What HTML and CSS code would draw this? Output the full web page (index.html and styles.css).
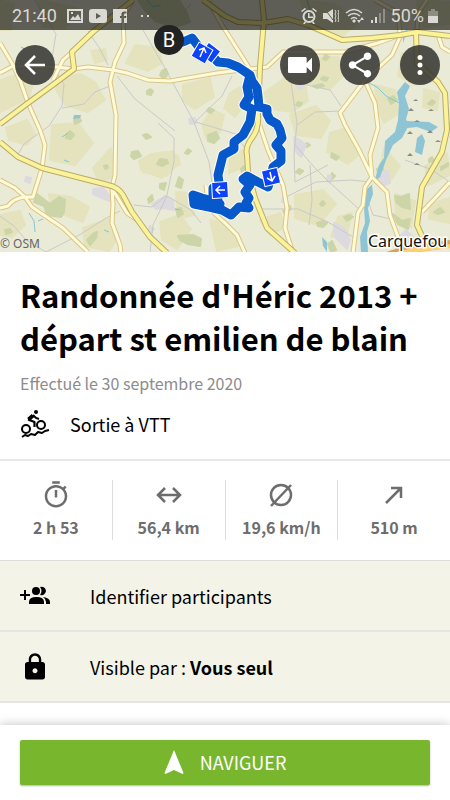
FILE: index.html
```html
<!DOCTYPE html>
<html lang="fr">
<head>
    <meta charset="utf-8">
    <meta name="viewport" content="width=device-width, initial-scale=1">
    <title>Randonnée d'Héric 2013</title>
    <link rel="stylesheet" href="styles.css">
</head>
<body>
    <header class="hero">
        <svg class="map" viewBox="0 0 450 252" preserveAspectRatio="xMidYMid slice" aria-hidden="true">
            <defs>
                <path id="main-roads" d="M0 124L28 103L50 87L74 69L72 52L93 32L133 0M0 142L18 157L42 168L108 185Q118 187 123 195L132 212L150 237L167 253M203 0L225 16L238 22L263 23L288 19L308 25L342 40L372 38L400 35L417 32L450 36M262 0L264 20L260 67L258 115Q259 129 252 138Q245 147 247 155L248 172L255 198L267 228L295 253M416 33L417 63L438 82L445 93L447 130L442 152L422 187L417 225L422 236"/>
                <path id="roads" d="M0 73L13 66L57 67L73 69L88 67L113 70L127 73L148 80L170 81L217 73L250 69L267 67L283 52L345 52L378 43L400 35M53 80L63 60L72 52M0 43L13 65L20 80L28 103L40 130L45 145L42 168L33 197L25 197Q14 198 8 206L0 208M133 0L123 17L124 43L115 62L110 82L116 115L115 175L112 187L113 205L112 223L120 245L121 253M113 190L127 213L137 220M0 180L15 188L25 197L32 207L63 228L88 252M208 0L222 25L250 69M400 37L392 55L365 80L340 113L345 125L358 148L372 177L387 192L390 215L398 237M366 83L375 103L378 128L370 155L372 177L365 187L363 205L358 213L353 253M375 0L398 13L400 33M427 0L418 13L417 32M438 35L442 47L450 52M260 126L268 150L283 185L287 208L285 228L293 253M206 185L208 203L215 214L225 223L237 235L245 253M450 182L438 195L422 212"/>
                <path id="track" d="M169 40L183 42L192 38L202 51L210 54L218 62L228 63L238 67L250 75L252 81L257 88L258 96L259 107L267 109L267 114L270 120L277 124L280 130L282 138L276 145L281 151L281 161L273 167L271 178L268 187L258 182L247 176L243 179L250 185L245 192L249 198L246 203L249 208L239 207L231 215L222 210L209 207L194 204L193 195L202 198L213 201L220 204L212 206L196 199M218 200L213 194L213 188M250 75L247 87L249 97L244 105L252 109L250 122L243 135L234 142L234 149L223 155L218 175L220 190"/>
            </defs>
            <rect width="450" height="252" fill="#eaebd7"/>
            <g class="patches" fill="#e4e3bd" stroke="#e4e3bd">
                <path d="M0 80l25-8 8 12-4 14-29 14zM58 78l22-4 15 8 10 18-17 12-23-7-9-15zM135 45l24 3 3 15-14 8-22-8zM52 125l26-2 15 20-18 22-25-5zM93 168l18-20 4 29-16 5zM145 160l28-9 5 13-12 12-23-4zM0 215l20-4 5 14-13 12-12-2zM49 194l22 3 18 10-6 15-32-12zM83 228l28-10 8 19-10 14-24-5zM183 85l27-7 4 19-19 12-12-8zM230 93l10-6 5 17-10 13-11-9zM212 110l12 5-4 17-14 6-4-14zM176 192l15 1 3 22-16 4zM210 220l18 3 10 23-21 5zM264 93l22-16 19 6 3 18-16 11-22-3zM290 115l26-9 14 15-9 17-25-3zM295 195l28-5 13 14-18 21-23-7zM330 133l16-5 16 24-14 12-21-12zM312 58l26-1 5 19-13 13-22-5zM375 85l20 5 4 23-15 10-7-16zM402 53l22 1 8 19-18 12-16-9zM384 148l16 18-8 13-13-5zM395 194l20 7-4 26-15-6zM424 89l15 4-2 17-14-3zM425 166l22-13 3 22-21 10zM430 204l20-6v25l-21-4zM260 220l20-7 5 14-15 8zM230 154l14-4-2 18-13 5zM0 0l14 4-3 26H0zM39 0l38 8-12 21-23-2zM300 0l35 4 22 19-15 14-34-14zM416 0l34 2v22l-27 3z"/>
                <path d="M139 161l12-7 15-2 12 4 2 9-13 3-5 10-11-4-10-4zM91 51l14-2 2 11-12 3zM27 120l8 14-8 11-18-5-3-12zM338 217l14-4-5 21-16 3zM160 222l20-7 11 14-14 20-15-9z"/>
            </g>
            <g class="patches" fill="#ccd5a7" stroke="#ccd5a7">
                <path d="M138 0h41l8 13 3 9-15 5-20-6-11-12zM162 71l4-2 2 5-4 5-4-4zM147 91l3-2 3 2-2 4-4-1zM209 108l5 2-3 3-4-2zM76 117l3-1 2 5-6 3-1-4zM132 152l6-1 3 5-7 3-3-3zM143 135l4-1 4 3-5 2zM160 159l7 1 1 3-6 3-5-2zM188 149l3 2-3 3-3-1zM208 135l8-3 3 6-5 5-6-2zM37 194l13 10 9-7 6 3-1 12-3 5-14-2-3-9-10-4zM66 135l4-4 4 4-3 4-5-1zM104 166l3-1 1 3-3 1zM148 199l4-4 1 5-4 3zM160 184l6-1-2 7-4-2zM179 177l4 3-2 8-5-2zM87 240l6-6 4-2-1 6-6 7zM178 236l15-1 8 4-1 7-12-2-8-4zM176 209l5-1 2 6-5 3z"/>
                <path d="M284 68l3-1-1 3zM287 78l5 1-3 2zM298 102l4 1-2 3-4-1zM313 86l9-2 2 2-7 2zM325 55l4 2-3 3-3-1zM323 77l5 1-2 3-5-2zM332 153l7 4-3 3-5-3zM332 173l3 3-4 4zM296 172l3-3 4 2-3 3zM320 204l3-3 2 3-3 2zM317 223l6-2 4 2-4 4-5-1zM344 217l6-2 3 2-6 4zM328 244l4-3 4 9-5 2zM283 211l7-5 1 3-6 5zM377 169l5-3 2 7-5 4zM395 196l6 1 8-3 1 15-8-2-6-5zM393 214l9 7 8-2-2 10-10-5zM429 159l3-2 2 4-5 1zM445 124l4-1v5l-4-1zM441 167l7-4v3l-7 4zM434 212l6-4 4 4-6 2zM421 76l6 2-3 4-5-2zM388 99l5-3 4 4-6 4zM432 100l3 2-3 3-4-1zM305 145l2-2 3 2-3 2zM241 169l3-3 1 4-3 3zM5 230l5-1 2 3-6 2z"/>
            </g>
            <g class="patches" fill="#dcdade" stroke="#dcdade">
                <path d="M93 189l10-1 6 7 3 7-10-4-9-4zM152 204l13-8 8 5 1 9-10-2-8 1zM189 119l6-1 1 5-6 1zM26 177l5 1-1 5-5-2zM294 137l6 3 6 5-5 12-6-6zM328 175l3 1-1 7-3-2zM334 223l10 5 6 12-3 9-12-12zM381 172l7-1 2 12-8 3-3-8zM398 238l8-8 9 9-6 11-13-2zM283 197l4-1-1 5-4 1zM297 84l4-1 1 5-4 1zM150 226l4 3-3 4-3-3z"/>
            </g>
            <g fill="none" stroke="#cac9c8" stroke-width="1">
                <path d="M35 0l21 34-5 30 13 20-2 22-13 20-25 18-7 12M62 108l22-4 11-12 15-6M88 31l12 18 8 16M117 76l18 23 20 16 20 16M191 4l-18 19-27-7M143 30l23 40 28 52 15 40 3 20M195 122l27-26 10-20M196 122l40 12 12 19M0 216l14 10 12 14 20 12 35-18 25-16 14-7M134 205l18 2 15-12 7-34v-23l-16-15M167 196l24 14 10 13M291 83l6 40-3 30 1 29 33-17M284 198l32-16 35-2 19 2M310 165l2 35-3 25M256 209l42 0 30 13 25 15M295 145l20 23 13 13 33 30M297 125l18-13 27-1M298 83l32 7 11 16M364 190l9 25 18 4M405 160l25 9 20 13M167 196l-14 29-3 28"/>
            </g>
            <g fill="#8ec4d4">
                <path d="M405 82l5 4-5 10 4 13-3 10 3 6-7 13-9 7-7 15-6 17-8 8 1 9-5 14 2 13-3 11 1 20h-7l-1-15 5-14-1-17 3-17 7-6 5-18 5-7 1-17 10-9 3-12 1-17-2-11zM407 121l22 1 9 5-7 5-14-5-10 1zM417 138l5-4 3 7-3 14-7-3zM403 32l5-3-5 14zM74 115l7 0-1 3-7 1zM322 237l5 5v10l-4-6z"/>
            </g>
            <path d="M21 47l4 2M62 137l6-4M29 213l5 8 1 11M38 221l5-2M104 230l5 2M64 160l5 2M175 209l5 1M365 81l12 6 9 9 15 8M307 0l3 10-4 7M147 0l6 7 8-2" fill="none" stroke="#83c6d3"/>
            <path d="M408 111h6l-3-3zM413 101h5l-2-2zM428 111h6l-3-2zM414 122h6l-3-2zM407 134h6l-3-3zM427 133h6l-3-3zM407 156h6l-3-3zM414 165h6l-3-2zM435 142h6l-3-2z" fill="#8a8a86"/>
            <path d="M387 256L408 249L450 244" fill="none" stroke="#dfa04f" stroke-width="8"/>
            <path d="M389 256L408 251L450 246" fill="none" stroke="#ffd070" stroke-width="4"/>
            <g fill="none" stroke-linejoin="round">
                <use href="#roads" stroke="#dcc488" stroke-width="5"/>
                <use href="#roads" stroke="#fffbd6" stroke-width="3"/>
                <use href="#main-roads" stroke="#b9ab6e" stroke-width="6"/>
                <use href="#main-roads" stroke="#fbf397" stroke-width="4"/>
            </g>
            <g fill="none" stroke-linejoin="round" stroke-linecap="round">
                <use href="#track" stroke="#fff" stroke-width="11"/>
                <use href="#track" stroke="#0758cb" stroke-width="9"/>
            </g>
            <g fill="#0b42fa" stroke="#fff" stroke-width="1">
                <rect x="-7" y="-7" width="15" height="15" transform="translate(210 52) rotate(38)"/>
                <path d="M207 49l5 1-2 5" fill="none"/>
                <rect x="-8" y="-8" width="16" height="16" transform="translate(202 53) rotate(30)"/>
                <rect x="-8" y="-8" width="16" height="16" transform="translate(271 177) rotate(-13)"/>
                <rect x="-8" y="-8" width="16" height="16" transform="translate(220 190) rotate(-3)"/>
            </g>
            <path d="M200 57l4-9M199 50l5-2 2 5M270 172l2 9M267 178l5 3 3-5M225 190h-9M220 186l-4 4 4 4" fill="none" stroke="#fff" stroke-width="1.5"/>
            <text class="town" x="368" y="247">Carquefou</text>
            <text class="credit" x="0" y="248">© OSM</text>
        </svg>

        <div class="overlay">
            <div class="status">
                <span>21:40</span>
                <svg width="16" height="14" viewBox="0 0 16 14"><path fill-rule="evenodd" d="M0 0h16v14H0zM2 2v10h12V2zM3 11l3-4 2 2 3-4 3 6zM4 3h2v2H4z"/></svg>
                <svg width="18" height="14" viewBox="0 0 18 14"><path fill-rule="evenodd" d="M3 0h12q3 0 3 3v8q0 3-3 3H3q-3 0-3-3V3q0-3 3-3zM7 4v6l5-3z"/></svg>
                <svg width="14" height="14" viewBox="0 0 14 14"><path d="M0 0h14v14h-3V9h2l.4-2H11V5.500q0-1 1-1h1.500v-2h-2Q8.500 2.500 8.500 5v2H7v2h1.500v5H0z"/></svg>
                <svg class="dots" width="9" height="4" viewBox="0 0 9 4"><path d="M0 1h2v2H0zM6 1h2v2H6z"/></svg>
                <span class="spacer"></span>
                <svg width="16" height="16" viewBox="0 0 16 16"><circle cx="8" cy="8.500" r="5.500" fill="none" stroke="#dad9d3" stroke-width="2"/><path d="M7 5h1.500v3.500H12V10H7zM0 3l4-3 1 1-4 3zM12 0l4 3-1 1-4-3zM2 16l2-3 1 1-1 2zM12 13l2 3h-2l-1-2z"/></svg>
                <svg width="16" height="16" viewBox="0 0 16 16"><path d="M0 5h4l6-4v14l-6-4H0z"/><path d="M1 0l9 12" fill="none" stroke="#5d5d56"/><path d="M12 2l1 2-1 2 1 2-1 2 1 2-1 2M15 2l1 2-1 2 1 2-1 2 1 2-1 2" fill="none" stroke="#dad9d3"/></svg>
                <svg width="20" height="16" viewBox="0 0 20 16"><path d="M1 5q8-7 16 0M3 8q6-5 12 0M6 11q3-3 6 0" fill="none" stroke="#dad9d3" stroke-width="1.600"/><path d="M7 13l2-2 2 2-2 2zM12 12h4l-2 3zM15 12l2-3 2 3z"/></svg>
                <svg width="14" height="14" viewBox="0 0 14 14"><path d="M0 11h2v3H0zM4 8h2v6H4z"/><path d="M8 4h2v10H8zM12 0h2v14h-2z" opacity=".4"/></svg>
                <span>50%</span>
                <svg class="battery" width="10" height="14" viewBox="0 0 10 14"><path d="M3 0h4v2h3v5H0V2h3z" opacity=".4"/><path d="M0 7h10v7H0z"/></svg>
            </div>
            <nav class="actions">
                <button class="round" aria-label="Retour">
                    <svg width="30" height="30" viewBox="0 0 30 30" fill="none" stroke="#fff" stroke-width="2.500"><path d="M25 15H7M15 6l-9 9 9 9"/></svg>
                </button>
                <span class="spacer"></span>
                <button class="round" aria-label="Vidéo">
                    <svg width="32" height="32" viewBox="0 0 24 24" fill="#fff"><path d="M17 10.500V7c0-.55-.45-1-1-1H4c-.55 0-1 .45-1 1v10c0 .55.45 1 1 1h12c.55 0 1-.45 1-1v-3.500l4 4v-11l-4 4z"/></svg>
                </button>
                <button class="round" aria-label="Partager">
                    <svg width="30" height="30" viewBox="0 0 24 24" fill="#fff"><path d="M18 16.080c-.76 0-1.440.3-1.960.77L8.910 12.700c.05-.23.09-.46.09-.7s-.04-.47-.09-.7l7.050-4.110c.54.5 1.250.81 2.040.81 1.660 0 3-1.340 3-3s-1.340-3-3-3-3 1.340-3 3c0 .24.04.47.09.7L8.040 9.810C7.500 9.310 6.790 9 6 9c-1.660 0-3 1.340-3 3s1.340 3 3 3c.79 0 1.500-.31 2.040-.81l7.120 4.160c-.05.21-.08.43-.08.65 0 1.610 1.310 2.920 2.920 2.920s2.920-1.310 2.920-2.920-1.310-2.920-2.920-2.920z"/></svg>
                </button>
                <button class="round" aria-label="Plus d'options">
                    <svg width="30" height="30" viewBox="0 0 24 24" fill="#fff"><circle cx="12" cy="6" r="2"/><circle cx="12" cy="12" r="2"/><circle cx="12" cy="18" r="2"/></svg>
                </button>
            </nav>
            <span class="pin">B</span>
        </div>
    </header>

    <main>
        <section class="summary">
            <h1>Randonnée d'Héric 2013 + départ st emilien de blain</h1>
            <p class="date">Effectué le 30 septembre 2020</p>
            <p class="sport">
                <svg width="30" height="30" viewBox="0 0 30 30" fill="none" stroke="#000">
                    <circle cx="6" cy="20" r="4" stroke-width="2"/>
                    <circle cx="21" cy="16" r="4" stroke-width="2"/>
                    <circle cx="16" cy="3" r="2" fill="#000" stroke="none"/>
                    <path d="M13 6.500L8.500 10.500" stroke-width="4"/>
                    <path d="M8 10.500l6.500 2.500v5" stroke-width="2.200" stroke-linejoin="round"/>
                    <path d="M13 6l3 3 3 1" stroke-width="2"/>
                    <path d="M2 28l3-2 3 1 3-2 4 1 3-3 4 1 3-2 4-1" stroke-width="2" stroke-linejoin="round"/>
                </svg>
                <span>Sortie à VTT</span>
            </p>
        </section>

        <ul class="stats">
            <li>
                <svg width="30" height="30" viewBox="0 0 24 24" fill="#6d6d6d"><path d="M15 1H9v2h6V1zm-4 13h2V8h-2v6zm8.030-6.610l1.420-1.420c-.43-.51-.9-.99-1.410-1.410l-1.420 1.420C16.070 4.740 14.120 4 12 4c-4.970 0-9 4.030-9 9s4.020 9 9 9 9-4.030 9-9c0-2.120-.74-4.070-1.970-5.610zM12 20c-3.870 0-7-3.130-7-7s3.130-7 7-7 7 3.130 7 7-3.130 7-7 7z"/></svg>
                <span>2 h 53</span>
            </li>
            <li>
                <svg width="30" height="30" viewBox="0 0 30 30" fill="none" stroke="#6d6d6d" stroke-width="2.500"><path d="M5 15h20M11 8l-7 7 7 7M19 8l7 7-7 7"/></svg>
                <span>56,4 km</span>
            </li>
            <li>
                <svg width="30" height="30" viewBox="0 0 30 30" fill="none" stroke="#6d6d6d" stroke-width="2.500"><circle cx="15" cy="15" r="10"/><path d="M5 26L25 5"/></svg>
                <span>19,6 km/h</span>
            </li>
            <li>
                <svg width="30" height="30" viewBox="0 0 30 30" fill="none" stroke="#6d6d6d" stroke-width="2.500"><path d="M7 23L22 8M12 8h10v10"/></svg>
                <span>510 m</span>
            </li>
        </ul>

        <div class="options">
            <button class="option">
                <svg width="30" height="30" viewBox="0 0 30 30"><path d="M0 13h4V9h2v4h4v2H6v4H4v-4H0z"/><circle cx="16" cy="10" r="4"/><path d="M9 23v-2q0-5 7.500-5t7.500 5v2zM20 6q5-1 6 4-1 5-6 4 3-4 0-8zM23 16q7 1 7 5v2h-4v-2q0-3-3-5z"/></svg>
                <span>Identifier participants</span>
            </button>
            <button class="option">
                <svg width="30" height="30" viewBox="0 0 24 24"><path d="M18 8h-1V6c0-2.760-2.240-5-5-5S7 3.240 7 6v2H6c-1.100 0-2 .9-2 2v10c0 1.100.9 2 2 2h12c1.100 0 2-.9 2-2V10c0-1.100-.9-2-2-2zm-6 9c-1.100 0-2-.9-2-2s.9-2 2-2 2 .9 2 2-.9 2-2 2zm3.100-9H8.900V6c0-1.710 1.390-3.100 3.100-3.100s3.100 1.390 3.100 3.100v2z"/></svg>
                <span>Visible par : <b>Vous seul</b></span>
            </button>
        </div>
    </main>

    <footer class="bottom">
        <button class="navigate">
            <svg width="20" height="24" viewBox="0 0 20 24" fill="#fff"><path d="M10 0l9.500 23-.8.900L10 20l-8.700 3.900-.8-.9z"/></svg>
            <span>NAVIGUER</span>
        </button>
    </footer>
</body>
</html>
```

FILE: styles.css
```css
* {
    box-sizing: border-box;
}
body {
    margin: 0;
    min-height: 100vh;
    display: flex;
    flex-direction: column;
    font-family: "Noto Sans CJK JP", "Noto Sans", sans-serif;
    font-size: 18px;
    line-height: 26px;
    color: #000;
    background: #fff;
}
h1, p, ul {
    margin: 0;
    padding: 0;
}
button {
    font: inherit;
    color: inherit;
    border: none;
    cursor: pointer;
}
svg {
    display: block;
    flex: none;
}
.spacer {
    flex: 1;
}

/* map */
.hero {
    position: relative;
    height: 252px;
}
.map {
    width: 100%;
    height: 100%;
}
.patches {
    stroke-width: 2px;
    stroke-linejoin: round;
}
.town {
    font: 16px "Noto Sans", sans-serif;
    fill: #111;
    stroke: #fff;
    stroke-width: 3px;
    paint-order: stroke;
}
.credit {
    font: 12px "Noto Sans", sans-serif;
    fill: #666;
}
.overlay {
    position: absolute;
    top: 0;
    left: 0;
    right: 0;
}
.status {
    display: flex;
    align-items: center;
    gap: 6px;
    height: 30px;
    padding: 2px 12px 0;
    font-family: Roboto, sans-serif;
    color: #dad9d3;
    fill: #dad9d3;
    background: rgba(0, 0, 0, 0.6);
}
.status span:first-child {
    margin-right: 4px;
}
.status .dots {
    margin-left: 8px;
}
.status .battery {
    margin-left: -2px;
}
.actions {
    display: flex;
    gap: 20px;
    padding: 15px 10px 0 15px;
}
.round {
    display: flex;
    align-items: center;
    justify-content: center;
    width: 40px;
    height: 40px;
    padding: 0;
    border-radius: 50%;
    background: rgba(50, 50, 48, 0.85);
}
.pin {
    position: absolute;
    top: 25px;
    left: calc(50% - 71px);
    width: 30px;
    height: 30px;
    border-radius: 50%;
    background: #222;
    color: #fff;
    font-family: Roboto, sans-serif;
    font-size: 20px;
    line-height: 30px;
    text-align: center;
}

/* title */
.summary {
    padding: 21px 20px 20px;
    border-bottom: 2px solid #e8e8e8;
}
h1 {
    font-size: 31px;
    line-height: 43px;
}
.date {
    margin-top: 12px;
    font-size: 16px;
    line-height: 24px;
    color: #8c8c8c;
}
.sport {
    display: flex;
    align-items: center;
    gap: 20px;
    margin-top: 14px;
    height: 30px;
}

/* stats */
.stats {
    display: flex;
    padding: 19px 0 20px;
    list-style: none;
    font-size: 16px;
    font-weight: bold;
    color: #6d6d6d;
}
.stats li {
    flex: 1;
    display: flex;
    flex-direction: column;
    align-items: center;
    gap: 4px;
    height: 60px;
}
.stats li + li {
    border-left: 1px solid #ddd;
}

/* options */
.options {
    border-top: 1px solid #ddd;
    background: #f3f3e7;
}
.option {
    display: flex;
    align-items: center;
    gap: 40px;
    width: 100%;
    height: 71px;
    padding: 0 20px;
    border-bottom: 2px solid #e5e5e1;
    background: none;
    text-align: left;
}

/* bottom bar */
.bottom {
    position: sticky;
    bottom: 0;
    margin-top: auto;
    padding: 15px 20px;
    background: #fff;
    box-shadow: 0 0 10px rgba(0, 0, 0, 0.25);
}
.navigate {
    display: flex;
    align-items: center;
    justify-content: center;
    gap: 16px;
    width: 100%;
    height: 45px;
    padding: 0 6px 2px;
    border-radius: 2px;
    color: #fff;
    background: #78b72d;
    box-shadow: 0 1px 2px rgba(0, 0, 0, 0.3);
}
```
